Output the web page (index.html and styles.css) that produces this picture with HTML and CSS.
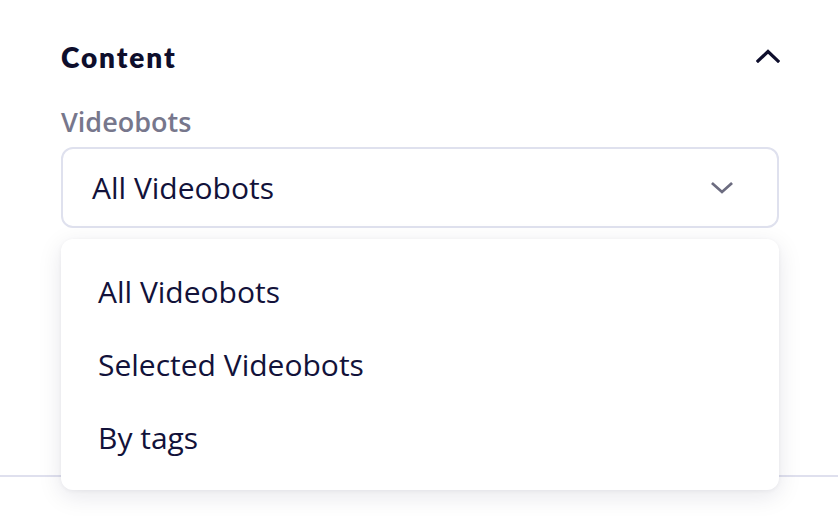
FILE: index.html
```html
<!DOCTYPE html>
<html>
<head>
<meta charset="utf-8">
<link rel="stylesheet" href="styles.css">
</head>
<body>
<div class="panel">
  <div class="section">
    <div class="head">
      <h2 class="title">Content</h2>
      <svg class="chev-up" width="24" height="14" viewBox="0 0 24 14"><path d="M2 12 L12 2.5 L22 12" fill="none" stroke="#0e0e2c" stroke-width="3.2" stroke-linecap="square"/></svg>
    </div>
    <div class="label">Videobots</div>
    <div class="field">
      <div class="select">
        <span class="value">All Videobots</span>
        <svg class="chev-down" width="22" height="14" viewBox="0 0 22 14"><path d="M2 3 L11 11 L20 3" fill="none" stroke="#6c6c80" stroke-width="2.8" stroke-linecap="square"/></svg>
      </div>
      <ul class="menu">
        <li>All Videobots</li>
        <li>Selected Videobots</li>
        <li>By tags</li>
      </ul>
    </div>
  </div>
  <div class="divider"></div>
</div>
</body>
</html>
```

FILE: styles.css
```css
html, body { margin: 0; padding: 0; background: #fff; }
body { font-family: "Open Sans", "Liberation Sans", sans-serif; color: #12123a; }
.panel { width: 838px; height: 516px; overflow: hidden; }
.section { padding: 38px 59px 0 61px; }
.head { display: flex; align-items: center; justify-content: space-between; height: 38px; }
.title { margin: 0; font-family: "Lato", "Inter", sans-serif; font-weight: 800; font-size: 28px; line-height: 38px; color: #0e0e2c; letter-spacing: 1.9px; }
.chev-up { margin-right: -1px; margin-top: -2px; }
.label { margin-top: 30px; font-size: 27px; line-height: 32px; font-weight: 600; color: #77778c; }
.field { position: relative; margin-top: 9px; }
.select { box-sizing: border-box; height: 81px; border: 2px solid #dfe1ee; border-radius: 12px; display: flex; align-items: center; justify-content: space-between; padding: 0 44px 0 29px; }
.value { font-size: 30px; line-height: 36px; }
.menu { position: absolute; left: 0; right: 0; top: calc(100% + 11px); margin: 0; padding: 16px 0 16px 0; list-style: none; background: #fff; border-radius: 12px; box-shadow: 0 6px 24px rgba(20, 20, 60, 0.10), 0 1px 4px rgba(20,20,60,0.05); z-index: 2; }
.menu li { height: 73px; line-height: 73px; padding-left: 37px; font-size: 30px; }
.divider { margin-top: 247px; height: 2px; background: #dfe0ee; }
```
